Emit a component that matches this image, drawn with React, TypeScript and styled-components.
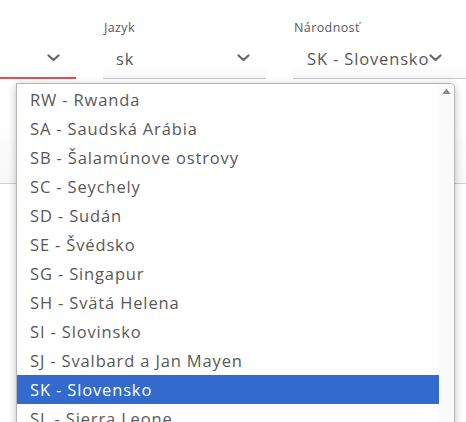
import React from 'react';
import styled, { createGlobalStyle } from 'styled-components';

const GlobalStyle = createGlobalStyle`
  html, body {
    margin: 0;
    padding: 0;
    background: #fff;
  }
  body {
    font-family: "Open Sans", Lato, sans-serif;
    color: #585858;
  }
`;

const Page = styled.div`
  position: relative;
  width: 466px;
  height: 422px;
  overflow: hidden;
  background: #fff;
`;

const FieldRow = styled.div`
  display: grid;
  grid-template-columns: 76px 163px 1fr;
  column-gap: 27px;
  padding-top: 18px;
`;

const Field = styled.div`
  display: flex;
  flex-direction: column;
`;

const Label = styled.div`
  height: 20px;
  font-size: 12.5px;
  line-height: 20px;
  letter-spacing: 0.4px;
  color: #585858;
  padding-left: 1px;
`;

const SelectBox = styled.div<{ $error?: boolean; $pad?: number; $padRight?: number }>`
  display: flex;
  align-items: center;
  height: 41px;
  padding: 0 ${({ $padRight }) => $padRight ?? 16}px 0 ${({ $pad }) => $pad ?? 13}px;
  font-size: 16.5px;
  letter-spacing: 0.85px;
  color: #585858;
  background: linear-gradient(#fff 70%, #f7f7f7);
  border-bottom: ${({ $error }) => ($error ? '2px solid #d9534f' : '1px solid #c8c8c8')};
  box-sizing: border-box;
`;

const Value = styled.span`
  flex: 1;
  min-width: 0;
  white-space: nowrap;
`;

const Chevron = () => (
  <svg width="13" height="8" viewBox="0 0 13 8" style={{ flexShrink: 0 }}>
    <path d="M1.5 1.5 L6.5 6 L11.5 1.5" fill="none" stroke="#666" strokeWidth="2.2" strokeLinecap="round" strokeLinejoin="round" />
  </svg>
);

const Content = styled.div`
  margin-top: 40px;
  height: 64px;
  background: linear-gradient(#fff, #f8f8f8);
  border-bottom: 1px solid #d0d0d0;
`;

const Dropdown = styled.div`
  position: absolute;
  top: 83px;
  left: 16px;
  width: 439px;
  height: 360px;
  display: flex;
  background: #fff;
  border: 1px solid #b5b5b5;
  border-radius: 0 5px 0 0;
  box-shadow: 0 2px 8px rgba(0, 0, 0, 0.25);
  box-sizing: border-box;
  overflow: hidden;
`;

const List = styled.ul`
  flex: 1;
  list-style: none;
  margin: 0;
  padding: 1px 0 0;
`;

const Option = styled.li<{ $selected?: boolean }>`
  height: 29px;
  line-height: 29px;
  padding-left: 13px;
  font-size: 16.5px;
  letter-spacing: 0.85px;
  white-space: nowrap;
  color: ${({ $selected }) => ($selected ? '#fff' : '#585858')};
  background: ${({ $selected }) => ($selected ? '#336acd' : 'transparent')};
`;

const Scrollbar = styled.div`
  width: 15px;
  background: #fafafa;
  display: flex;
  justify-content: center;
  padding-top: 4px;
  box-sizing: border-box;
`;

const options = [
  'RW - Rwanda',
  'SA - Saudská Arábia',
  'SB - Šalamúnove ostrovy',
  'SC - Seychely',
  'SD - Sudán',
  'SE - Švédsko',
  'SG - Singapur',
  'SH - Svätá Helena',
  'SI - Slovinsko',
  'SJ - Svalbard a Jan Mayen',
  'SK - Slovensko',
  'SL - Sierra Leone',
];

export default function App() {
  return (
    <>
      <GlobalStyle />
      <Page>
        <FieldRow>
          <Field>
            <Label />
            <SelectBox $error>
              <Value />
              <Chevron />
            </SelectBox>
          </Field>
          <Field>
            <Label>Jazyk</Label>
            <SelectBox>
              <Value>sk</Value>
              <Chevron />
            </SelectBox>
          </Field>
          <Field>
            <Label>Národnosť</Label>
            <SelectBox $pad={14} $padRight={29}>
              <Value>SK - Slovensko</Value>
              <Chevron />
            </SelectBox>
          </Field>
        </FieldRow>
        <Content />
        <Dropdown>
          <List>
            {options.map((o) => (
              <Option key={o} $selected={o.startsWith('SK')}>
                {o}
              </Option>
            ))}
          </List>
          <Scrollbar>
            <svg width="9" height="6" viewBox="0 0 9 6">
              <path d="M0.5 6 L4.5 0.5 L8.5 6 Z" fill="#888" />
            </svg>
          </Scrollbar>
        </Dropdown>
      </Page>
    </>
  );
}
